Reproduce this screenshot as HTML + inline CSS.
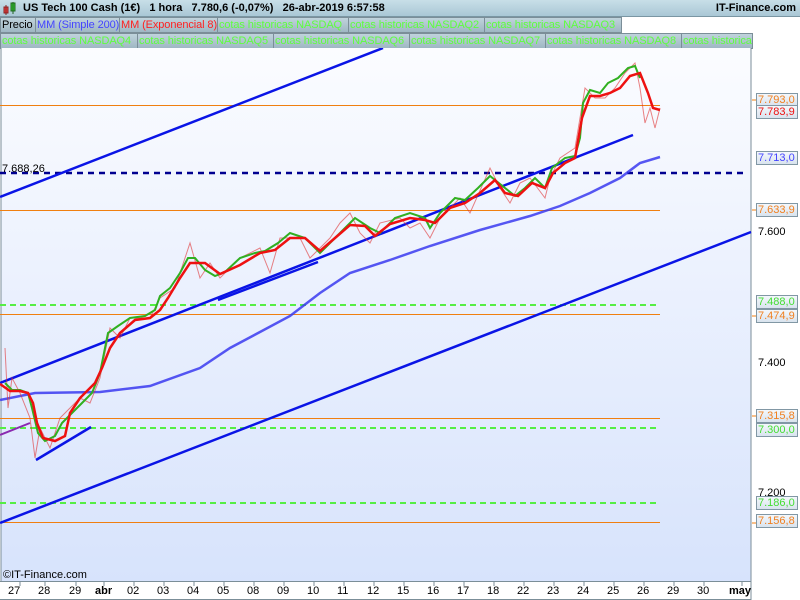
<!DOCTYPE html>
<html><head><meta charset="utf-8"><style>
body{margin:0;width:800px;height:600px;overflow:hidden;background:#fff;font-family:"Liberation Sans",sans-serif;position:relative}
.hdr{position:absolute;left:0;top:0;width:800px;height:16px;background:linear-gradient(#c8dfe8,#a9c7d5);border-bottom:1px solid #7a96a3;font-size:11px;font-weight:bold;color:#000}
.tab{position:absolute;height:14px;line-height:14px;font-size:11px;background:linear-gradient(#c0d3dc,#9fb7c3);border:1px solid #7b8e98;color:#5eff3e;white-space:nowrap;overflow:hidden;padding:0 1px;letter-spacing:-0.1px}
.lb{position:absolute;left:756px;width:39px;height:12px;border:1px solid #8197a4;background:linear-gradient(#f4f8fc,#d9e3ee);font-size:11px;line-height:12px;text-align:left;padding-left:1px}
.tx{position:absolute;left:758px;font-size:11px}
.xl{position:absolute;top:585px;font-size:11px}
</style></head><body>
<div class="hdr">
<svg style="position:absolute;left:3px;top:2px" width="14" height="14"><rect x="1" y="5" width="4" height="6" fill="#e44" stroke="#822"/><line x1="3" y1="3" x2="3" y2="13" stroke="#822"/><rect x="8" y="1" width="4" height="8" fill="#3c3" stroke="#262"/><line x1="10" y1="0" x2="10" y2="12" stroke="#262"/></svg>
<span style="position:absolute;left:23px;top:2px">US Tech 100 Cash (1€)&nbsp;&nbsp;&nbsp;1 hora&nbsp;&nbsp;&nbsp;7.780,6 (-0,07%)&nbsp;&nbsp;&nbsp;26-abr-2019 6:57:58</span>
<span style="position:absolute;right:4px;top:2px">IT-Finance.com</span>
</div>
<div class="tab" style="left:0;top:17px;width:33px;color:#000">Precio</div>
<div class="tab" style="left:35px;top:17px;width:82px;color:#4444ff">MM (Simple 200)</div>
<div class="tab" style="left:119px;top:17px;width:96px;color:#ff2020">MM (Exponencial 8)</div>
<div class="tab" style="left:217px;top:17px;width:129px">cotas historicas NASDAQ</div>
<div class="tab" style="left:348px;top:17px;width:134px">cotas historicas NASDAQ2</div>
<div class="tab" style="left:484px;top:17px;width:134px">cotas historicas NASDAQ3</div>
<div class="tab" style="left:0;top:33px;width:135px">cotas historicas NASDAQ4</div>
<div class="tab" style="left:137px;top:33px;width:134px">cotas historicas NASDAQ5</div>
<div class="tab" style="left:273px;top:33px;width:134px">cotas historicas NASDAQ6</div>
<div class="tab" style="left:409px;top:33px;width:134px">cotas historicas NASDAQ7</div>
<div class="tab" style="left:545px;top:33px;width:134px">cotas historicas NASDAQ8</div>
<div class="tab" style="left:681px;top:33px;width:68px">cotas historicas</div>
<svg style="position:absolute;left:0;top:48px" width="800" height="552">
<defs><linearGradient id="g" x1="0" y1="0" x2="0" y2="1"><stop offset="0" stop-color="#fbfcff"/><stop offset="1" stop-color="#d7e3fc"/></linearGradient></defs>
<rect x="1" y="0" width="750" height="533" fill="url(#g)"/>
<line x1="1" y1="0" x2="1" y2="533" stroke="#7b8e98"/>
<line x1="751" y1="0" x2="751" y2="552" stroke="#7b8e98"/>
<line x1="0" y1="533.5" x2="751" y2="533.5" stroke="#7b8e98"/>
<line x1="0" y1="551.5" x2="751" y2="551.5" stroke="#7b8e98"/>
<g stroke="#f07f10" stroke-width="1">
<line x1="0" y1="57.5" x2="660" y2="57.5"/><line x1="0" y1="162.5" x2="660" y2="162.5"/><line x1="0" y1="266.5" x2="660" y2="266.5"/><line x1="0" y1="370.5" x2="660" y2="370.5"/><line x1="0" y1="474.5" x2="660" y2="474.5"/>
<line x1="752" y1="52" x2="756" y2="52"/><line x1="752" y1="162" x2="756" y2="162"/><line x1="752" y1="268" x2="756" y2="268"/><line x1="752" y1="368" x2="756" y2="368"/><line x1="752" y1="475" x2="756" y2="475"/>
</g>
<g stroke="#55ee44" stroke-width="2" stroke-dasharray="6,4">
<line x1="0" y1="257" x2="660" y2="257"/><line x1="0" y1="380" x2="660" y2="380"/><line x1="0" y1="455" x2="660" y2="455"/>
</g>
<line x1="0" y1="125" x2="745" y2="125" stroke="#000090" stroke-width="2.5" stroke-dasharray="6,5"/>
<text x="2" y="124" font-size="11" font-family="Liberation Sans">7.688,26</text>
<g stroke="#0a14e6" stroke-width="2.5">
<line x1="0" y1="149" x2="383" y2="0"/>
<line x1="0" y1="335" x2="633" y2="87"/>
<line x1="0" y1="475" x2="751" y2="184"/>
<line x1="218" y1="252" x2="318" y2="214"/>
<line x1="36" y1="412" x2="91" y2="379"/>
</g>
<line x1="0" y1="387" x2="30" y2="375" stroke="#8a2ab0" stroke-width="2"/>
<polyline fill="none" stroke="#3a3af0" stroke-width="2.5" opacity="0.85" points="0,352 35,345 100,344 150,338 200,320 230,300 260,284 290,268 320,245 350,225 390,212 430,198 480,182 530,168 560,158 590,145 620,130 640,115 660,109"/>
<polyline fill="none" stroke="#e03030" stroke-width="1" opacity="0.6" points="5,300 8,360 12,330 20,345 30,370 35,410 40,380 50,400 60,370 70,360 80,350 90,355 100,330 110,280 120,290 130,270 150,270 160,250 175,240 190,195 200,230 210,215 220,230 240,210 260,200 270,225 280,190 300,190 310,210 320,200 330,190 340,175 350,165 360,185 370,195 380,175 400,170 410,180 420,175 430,190 440,170 460,150 470,165 490,120 500,140 510,155 520,135 530,130 545,150 550,130 560,110 575,100 580,70 585,40 595,50 605,50 615,40 625,25 635,15 640,40 645,75 650,60 655,80 660,60"/>
<polyline fill="none" stroke="#30b020" stroke-width="2" points="5,335 12,342 20,342 28,345 32,360 38,385 45,393 55,388 62,375 72,365 82,355 92,345 100,325 108,285 118,278 130,270 145,268 155,262 160,248 170,240 180,225 188,210 195,210 205,222 215,228 225,224 240,210 255,205 265,203 278,195 290,185 305,190 320,205 330,195 345,180 355,170 370,180 380,185 395,170 410,165 425,170 430,180 440,165 455,150 465,152 478,140 490,128 505,140 515,148 525,140 535,130 545,140 552,120 565,110 575,108 580,90 583,55 590,42 600,45 608,35 618,30 628,20 635,18 640,30"/>
<polyline fill="none" stroke="#ee1111" stroke-width="2.5" points="0,336 10,343 20,343 28,345 33,355 37,375 43,390 55,393 65,388 70,365 80,350 95,335 102,320 110,300 120,285 135,272 150,270 160,262 168,250 180,230 190,215 205,215 220,226 240,217 260,205 275,202 290,190 305,190 320,203 335,190 350,177 365,178 375,188 390,176 410,170 425,172 435,175 450,160 465,155 480,145 495,132 505,145 518,148 532,135 545,140 553,125 565,115 575,110 582,70 590,48 600,48 610,45 620,40 630,28 640,25 648,45 653,60 660,62"/>
<g stroke="#7b8e98"><line x1="20" y1="534" x2="20" y2="538"/><line x1="45" y1="534" x2="45" y2="538"/><line x1="76" y1="534" x2="76" y2="538"/><line x1="104" y1="534" x2="104" y2="538"/><line x1="134" y1="534" x2="134" y2="538"/><line x1="164" y1="534" x2="164" y2="538"/><line x1="194" y1="534" x2="194" y2="538"/><line x1="224" y1="534" x2="224" y2="538"/><line x1="254" y1="534" x2="254" y2="538"/><line x1="284" y1="534" x2="284" y2="538"/><line x1="314" y1="534" x2="314" y2="538"/><line x1="344" y1="534" x2="344" y2="538"/><line x1="374" y1="534" x2="374" y2="538"/><line x1="404" y1="534" x2="404" y2="538"/><line x1="434" y1="534" x2="434" y2="538"/><line x1="464" y1="534" x2="464" y2="538"/><line x1="494" y1="534" x2="494" y2="538"/><line x1="524" y1="534" x2="524" y2="538"/><line x1="554" y1="534" x2="554" y2="538"/><line x1="584" y1="534" x2="584" y2="538"/><line x1="614" y1="534" x2="614" y2="538"/><line x1="644" y1="534" x2="644" y2="538"/><line x1="674" y1="534" x2="674" y2="538"/><line x1="704" y1="534" x2="704" y2="538"/><line x1="742" y1="534" x2="742" y2="538"/></g>
<text x="3" y="530" font-size="11" font-family="Liberation Sans">©IT-Finance.com</text>
</svg>
<div class="lb" style="top:93px;color:#f08020">7.793,0</div>
<div class="lb" style="top:105px;color:#ee1111">7.783,9</div>
<div class="lb" style="top:151px;color:#4444ff">7.713,0</div>
<div class="lb" style="top:203px;color:#f08020">7.633,9</div>
<div class="tx" style="top:226px">7.600</div>
<div class="lb" style="top:295px;color:#44dd33">7.488,0</div>
<div class="lb" style="top:309px;color:#f08020">7.474,9</div>
<div class="tx" style="top:357px">7.400</div>
<div class="lb" style="top:409px;color:#f08020">7.315,8</div>
<div class="lb" style="top:423px;color:#44dd33">7.300,0</div>
<div class="tx" style="top:487px">7.200</div>
<div class="lb" style="top:496px;color:#44dd33">7.186,0</div>
<div class="lb" style="top:514px;color:#f08020">7.156,8</div>
<div class="xl" style="left:8px">27</div><div class="xl" style="left:38px">28</div><div class="xl" style="left:69px">29</div><div class="xl" style="left:95px;font-weight:bold">abr</div><div class="xl" style="left:127px">02</div><div class="xl" style="left:157px">03</div><div class="xl" style="left:187px">04</div><div class="xl" style="left:217px">05</div><div class="xl" style="left:247px">08</div><div class="xl" style="left:277px">09</div><div class="xl" style="left:307px">10</div><div class="xl" style="left:337px">11</div><div class="xl" style="left:367px">12</div><div class="xl" style="left:397px">15</div><div class="xl" style="left:427px">16</div><div class="xl" style="left:457px">17</div><div class="xl" style="left:487px">18</div><div class="xl" style="left:517px">22</div><div class="xl" style="left:547px">23</div><div class="xl" style="left:577px">24</div><div class="xl" style="left:607px">25</div><div class="xl" style="left:637px">26</div><div class="xl" style="left:667px">29</div><div class="xl" style="left:697px">30</div><div class="xl" style="left:729px;font-weight:bold">may</div>
</body></html>
